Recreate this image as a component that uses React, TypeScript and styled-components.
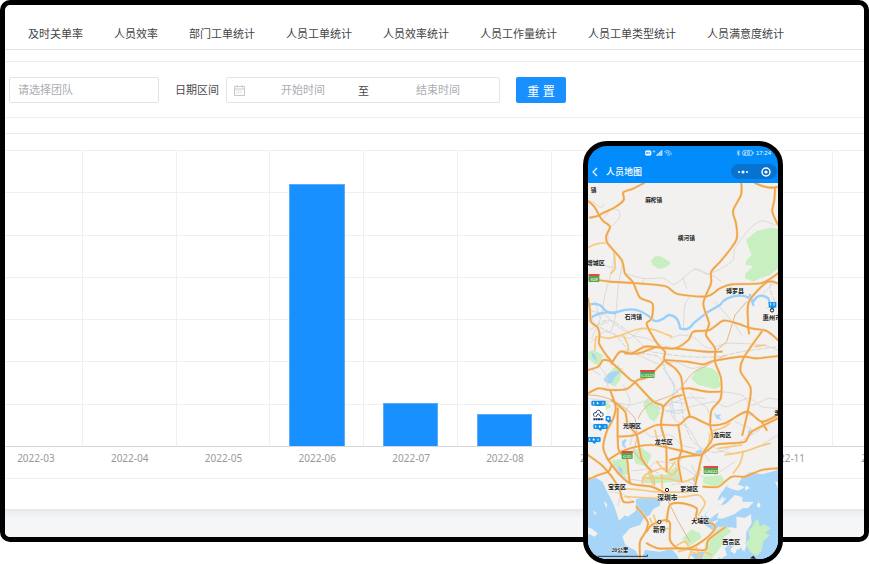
import React from "react";
import styled, { createGlobalStyle } from "styled-components";

const GlobalStyle = createGlobalStyle`
  * { box-sizing: border-box; }
  body {
    margin: 0;
    background: #fff;
    font-family: "Liberation Sans", "Noto Sans CJK SC", sans-serif;
    font-size: 11px;
    color: #4a4a4a;
  }
  button, input { font: inherit; }
`;

const Stage = styled.main`
  position: relative;
  min-height: 564px;
`;

const Monitor = styled.section`
  display: flex;
  flex-direction: column;
  overflow: hidden;
  border: 5px solid #000;
  border-radius: 10px;
  background: #fff;
`;

const Tabs = styled.nav`
  display: flex;
  gap: 31px;
  padding: 20px 23px 6px;
  border-bottom: 1px solid #e2e3e5;
  white-space: nowrap;
`;

const Tab = styled.a`
  color: #444;
  line-height: 18px;
  text-decoration: none;
`;

const Filters = styled.form`
  display: flex;
  align-items: center;
  margin-top: 11px;
  padding: 15px 4px 14px;
  border-top: 1px solid #ebecee;
  border-bottom: 1px solid #eff0f2;
`;

const TeamInput = styled.input`
  width: 150px;
  height: 26px;
  padding: 0 8px;
  border: 1px solid #e2e4e8;
  border-radius: 2px;
  outline: none;
  &::placeholder { color: #a9acb2; }
`;

const DateLabel = styled.label`
  margin: 0 7px 0 16px;
  line-height: 18px;
`;

const DateRange = styled.div`
  display: flex;
  align-items: center;
  width: 274px;
  height: 26px;
  padding-left: 7px;
  border: 1px solid #e2e4e8;
  border-radius: 2px;
`;

const DateInput = styled.input<{ $width: number }>`
  width: ${(p) => p.$width}px;
  height: 22px;
  padding: 0;
  border: 0;
  outline: none;
  background: transparent;
  text-align: center;
  &::placeholder { color: #a9acb2; }
`;

const RangeWord = styled.span`
  margin-right: 9px;
`;

const CalendarIcon = styled.svg`
  flex: none;
  width: 11px;
  height: 11px;
  margin-right: 3px;
`;

const ResetButton = styled.button`
  width: 50px;
  height: 26px;
  margin-left: 16px;
  padding: 0;
  border: 0;
  border-radius: 2px;
  background: #1890ff;
  color: #fff;
  font-size: 12px;
`;

const ChartCard = styled.section`
  margin-top: 15px;
  padding-top: 16px;
  border-top: 1px solid #e9eaec;
  border-bottom: 1px solid #eff0f2;
`;

const Chart = styled.div`
  display: grid;
  grid-template-columns: repeat(10, 1fr);
  width: calc(100% + 79px);
  margin-left: -16px;
`;

const Plot = styled.div`
  display: flex;
  grid-column: 1 / -1;
  height: 297px;
  border-bottom: 1px solid #d6d7d9;
  background: repeating-linear-gradient(#edeff1 0 1px, transparent 1px calc(100% / 7));
`;

const Band = styled.div`
  display: flex;
  flex: 1;
  align-items: flex-end;
  justify-content: center;
  border-right: 1px solid #eff0f2;
`;

const Bar = styled.div`
  width: 60%;
  border: 1px solid #5cacf7;
  border-bottom: 0;
  background: #1890ff;
`;

const Month = styled.span`
  padding: 3px 0 11px;
  color: #999;
  font-family: "Noto Sans", sans-serif;
  font-size: 10px;
  line-height: 17px;
  text-align: center;
`;

const PageFoot = styled.footer`
  height: 28px;
  margin-top: 30px;
  background: linear-gradient(#e5e7ea 0, #edeff0 4px, #f5f6f8 9px);
`;

const Phone = styled.section`
  position: absolute;
  top: 141px;
  left: 583px;
  width: 200px;
  overflow: hidden;
  border: 5px solid #000;
  border-radius: 24px;
  background: #028bfb;
  color: #fff;
`;

const StatusBar = styled.div`
  display: flex;
  align-items: center;
  justify-content: space-between;
  height: 14px;
  padding: 0 7px 0 57px;
  font-size: 6px;
`;

const StatusGroup = styled.div`
  display: flex;
  align-items: center;
  gap: 1px;
`;

const AppBar = styled.header`
  display: flex;
  align-items: center;
  height: 23px;
  padding: 0 1px 0 4px;
`;

const BackButton = styled.button`
  display: flex;
  width: 6px;
  height: 12px;
  padding: 0;
  border: 0;
  background: none;
`;

const AppTitle = styled.h1`
  flex: 1;
  margin: 0 0 0 8px;
  font-size: 9px;
  font-weight: 500;
  line-height: 12px;
`;

const Capsule = styled.div`
  display: flex;
  align-items: center;
  justify-content: space-around;
  width: 46px;
  height: 15px;
  border-radius: 8px;
  background: #0873ce;
`;

const CapsuleButton = styled.button`
  display: flex;
  padding: 0;
  border: 0;
  background: none;
`;

const MapDrawing = styled.svg`
  display: block;
  width: 100%;
  height: 376px;
  background: #f2f1ef;
  font-family: "Liberation Serif", "Noto Sans CJK SC", sans-serif;
`;

const tabs = [
  "及时关单率", "人员效率", "部门工单统计", "人员工单统计",
  "人员效率统计", "人员工作量统计", "人员工单类型统计", "人员满意度统计",
];

const months = [
  { name: "2022-03", value: 0 },
  { name: "2022-04", value: 0 },
  { name: "2022-05", value: 0 },
  { name: "2022-06", value: 88.4 },
  { name: "2022-07", value: 14.6 },
  { name: "2022-08", value: 10.8 },
  { name: "2022-09", value: 0 },
  { name: "2022-10", value: 0 },
  { name: "2022-11", value: 0 },
  { name: "2022-12", value: 0 },
];

/* Turns straight "M x y L x y ..." polylines into curves through the same points. */
function smooth(d: string): string {
  return d
    .split("M")
    .filter((part) => part.trim())
    .map((part) => {
      const n = (part.match(/\d+/g) || []).map(Number);
      const pts: number[][] = [];
      for (let i = 0; i + 1 < n.length; i += 2) pts.push([n[i], n[i + 1]]);
      let out = `M${pts[0][0]} ${pts[0][1]}`;
      for (let i = 0; i < pts.length - 1; i++) {
        const a = pts[i - 1] || pts[i];
        const b = pts[i];
        const c = pts[i + 1];
        const e = pts[i + 2] || c;
        out += `C${b[0] + (c[0] - a[0]) / 7} ${b[1] + (c[1] - a[1]) / 7} ${c[0] - (e[0] - b[0]) / 7} ${c[1] - (e[1] - b[1]) / 7} ${c[0]} ${c[1]}`;
      }
      return out;
    })
    .join("");
}

const minorRoads = [
  "M39 195 L60 205 L76 217 L83 214 L86 208",
  "M83 255 L108 224 L131 227 L132 250 L103 284 L98 330",
  "M118 345 L112 400 L90 478 L78 545 L50 610",
  "M143 375 L138 410 L130 450 L122 540 L108 590",
  "M150 415 L205 430 L265 430 L300 447 L360 402 L400 417 L470 380 L480 340 L520 285 L560 258 L600 270",
  "M360 402 L420 425 L437 440 M325 430 L335 460 M205 430 L205 448",
  "M345 485 L330 510 L325 580 M420 500 L455 540 L480 570 L500 600",
  "M565 475 L600 440 M39 385 L80 378 L90 392 L125 400",
  "M39 525 L90 540 L122 570 L170 600 L215 610 L260 630",
  "M50 620 L90 590 L160 610 L205 580 L240 585",
  "M285 610 L320 600 L360 610 L400 640 L460 625 L560 630 L609 645",
  "M39 790 L110 800 L165 810 L210 800 L250 820 L330 790 L390 790",
  "M255 820 L310 835 L345 815 L390 812 L410 860",
  "M345 775 L380 805 L420 800 L455 815 L520 790 L560 815 L609 820",
  "M438 770 L500 780 L530 810 L580 790 L609 795",
  "M150 645 L200 665 L260 690 L300 680 L350 700 L390 690",
  "M145 750 L165 800 L150 840 L175 880 L165 930",
  "M60 680 L90 715 L100 760 M80 640 L110 690",
  "M285 800 L295 850 L340 880 L370 930 L405 980",
  "M200 880 L230 905 L285 900 L320 930 L360 940",
  "M400 895 L420 940 L480 955 L540 940 L609 900",
  "M508 835 L550 850 L565 875 M480 860 L535 885",
  "M90 970 L125 1000 L160 1030 L220 1040",
  "M170 1008 L220 1000 L245 980 L310 990 L360 1020",
  "M320 970 L300 1010 L315 1050 M350 990 L360 1010 L390 1030",
  "M290 1050 L340 1040 L370 1060 M420 1020 L450 1000 L480 980",
  "M45 540 L65 570 L100 560 M60 500 L75 550",
  "M105 1070 L150 1080 L170 1100 M140 1060 L130 1110",
];

const railRoads = [
  "M39 555 L80 580 L120 600 L170 650 L250 665 L275 715 L315 790 L325 850",
  "M592 425 L585 460 L600 505 L575 520",
  "M45 585 L100 555 L160 590 L220 645 L260 655 L340 665 L430 665 L500 650 L609 635",
  "M180 950 L210 985 L250 1015 L320 1035",
  "M325 845 L350 915 L405 950 L460 940 L609 850",
];

const dashedHighways = [
  "M39 780 C90 780 140 800 180 850 C190 900 185 920 175 950 C210 990 235 1010 240 1050",
  "M190 850 C215 790 260 800 300 775 C340 740 340 710 390 695 L450 660",
  "M515 500 L480 540 L455 620 L420 650 L340 645 L270 635",
  "M280 1100 L310 1160 L345 1220",
];

const highways = [
  "M207 144 L172 162 L145 172 L146 195 L118 218 L84 234 L70 242 L45 248",
  "M39 198 L58 215 L73 242 L84 258 L105 275 L94 302 L98 325 L140 375 L150 415 L174 442 L195 488 L232 505 L230 550 L215 565 L225 590 L250 630 L270 650 L268 675 L300 700 L318 725 L325 770 L345 845",
  "M499 144 L498 180 L474 228 L483 265 L484 315 L440 375 L409 410 L408 445 L385 505 L402 565 L393 600 L420 640 L420 680 L438 730 L437 790 L410 825 L405 870",
  "M540 144 L565 154 L588 158 L609 156 M600 160 L598 195 L592 230 L609 270",
  "M39 430 L105 440 L174 444 L270 453 L307 477 L395 484 L435 460 L470 448 L560 444 L609 415",
  "M108 680 L165 733 L180 742 L235 800 L264 815 L258 870 L273 930 L275 1010",
  "M609 445 L575 442 L522 500 L519 560 L522 595 M560 590 L505 670 L497 710 L527 760 L518 830 L502 900",
  "M39 490 L45 525 L48 560 L68 578 L74 600 L72 625 L90 655 L110 680",
  "M110 685 L135 650 L170 655 L210 635 L250 637 L300 640 L340 615 L355 590 L403 585 L445 557 L485 565 L530 580 L575 588 L609 615",
  "M270 675 L335 680 L385 688 L415 678 L500 665 L545 670 L609 663",
  "M150 655 L190 655 L245 635 M300 640 L390 650 L440 650",
  "M39 705 L70 695 L85 675 L110 680",
  "M39 775 L70 760 L105 765 L155 762 L188 735 L220 725 L270 675",
  "M128 905 L180 900 L245 870 L310 870 L345 845 L405 870 L450 865 L515 830 L560 860 L609 840",
  "M105 765 L122 815 L115 850 L95 890 L85 940 L112 992 L165 1045 L230 1055 L280 1080",
  "M110 795 L150 830 L158 870 L185 900 L200 970 L230 1010",
  "M128 820 L130 940 L155 970 L160 1010 L165 1045",
  "M310 870 L316 910 L320 945 L310 980 L320 1040",
  "M405 870 L412 910 L390 945 L380 965 L360 1055",
  "M100 975 L150 945 L230 930 L330 950 L375 960 L420 930 L460 925 L510 920 L530 890 L609 850",
  "M39 960 L85 995 L130 1055 L145 1100 L175 1100 M39 1035 L70 1020 L100 1010 L110 990",
  "M185 1115 L218 1160 L212 1190 L195 1220 L195 1272",
  "M215 1190 L230 1170 L270 1155 L285 1165 L285 1215 L310 1240 L355 1235 L405 1200 L418 1170 L365 1150 L365 1120 L325 1105 L285 1110 L275 1160",
  "M215 1225 L250 1240 L320 1240 L390 1245 L400 1215 L450 1177",
  "M385 1055 L430 1055 L470 1025 L510 1025 L560 1005 L609 1000",
  "M320 780 L290 790 L265 815 M320 762 L345 760 L395 770 L438 770",
  "M560 860 L575 885 M285 975 L330 965 L375 960",
];

const localRoads = [
  "M39 338 L60 328 L95 325 L116 350 L120 400 L107 415",
  "M60 645 L65 605 L100 610 L140 600 L180 585 L205 580 L240 585 L290 605",
  "M145 600 L160 635 L155 655",
  "M400 930 L410 890 L440 880 L465 865 M430 940 L500 930",
  "M540 635 L570 630 M450 960 L505 950 L550 935 L585 925",
  "M202 1030 L270 1030 L325 1040 L370 1020 L375 990",
  "M202 1045 L210 1020 L265 1000 L290 1020 L310 1000",
  "M135 1060 L200 1065 L240 1070 L340 1070 L360 1050",
  "M150 1085 L260 1090 L330 1085 L370 1080 L390 1105 L370 1140",
  "M225 1150 L235 1175 M236 1140 L246 1170 M245 1185 L280 1180",
  "M300 1235 L330 1220 L350 1250 L380 1260 M310 1250 L360 1240 L410 1260 M340 1272 L360 1230 L375 1272",
  "M505 950 L495 985 L475 1015 M240 885 L250 930",
  "M245 980 L275 1010 L300 980 M220 1010 L235 1050 M260 1020 L262 1060",
];

const rivers = [
  "M39 510 Q70 500 85 520 T130 530 T185 525 Q215 535 230 552 T280 540 Q310 540 315 580 Q340 590 355 565 Q380 545 400 530 L435 510 Q450 485 490 482 Q520 480 535 500 Q550 470 580 490 L590 525",
  "M45 550 Q80 525 120 535",
  "M525 480 L535 510",
];

const places = [
  { name: "镇", x: 56, y: 171, size: 17 },
  { name: "麻榨镇", x: 236, y: 200, size: 17 },
  { name: "横河镇", x: 334, y: 315, size: 17 },
  { name: "增城区", x: 62, y: 389, size: 18 },
  { name: "博罗县", x: 480, y: 474, size: 18 },
  { name: "石湾镇", x: 175, y: 553, size: 17 },
  { name: "惠州市", x: 591, y: 555, size: 19 },
  { name: "光明区", x: 171, y: 879, size: 18 },
  { name: "龙华区", x: 266, y: 928, size: 18 },
  { name: "龙岗区", x: 442, y: 905, size: 18 },
  { name: "惠", x: 607, y: 839, size: 18 },
  { name: "宝安区", x: 126, y: 1063, size: 18 },
  { name: "罗湖区", x: 343, y: 1069, size: 18 },
  { name: "深圳市", x: 277, y: 1095, size: 20 },
  { name: "大埔区", x: 376, y: 1164, size: 18 },
  { name: "新界", x: 253, y: 1191, size: 19 },
  { name: "西贡区", x: 469, y: 1228, size: 18 },
  { name: "20公里", x: 135, y: 1251, size: 17 },
];

const shields = [
  { name: "S29", x: 41, y: 417, width: 32 },
  { name: "G1523", x: 196, y: 705, width: 43 },
  { name: "G15", x: 140, y: 948, width: 33 },
  { name: "G0422", x: 386, y: 993, width: 43 },
];

const vehicles = [
  { x: 49, y: 797, width: 43 },
  { x: 81, y: 843, width: 26 },
  { x: 55, y: 867, width: 43 },
  { x: 37, y: 906, width: 40 },
];

function RegionMap() {
  return (
    <MapDrawing viewBox="39 144 570 1128" preserveAspectRatio="xMidYMid slice" role="img" aria-label="人员地图">
      <g fill="#c8efc0">
        <path d="M513 315 L545 288 L590 278 L609 281 V400 L585 420 L555 430 L535 440 L510 430 L512 415 L535 393 L510 390 L515 375 L530 360 L522 340Z" />
        <path d="M228 377 L242 362 L260 365 L288 383 L273 397 L250 402 L233 390Z" />
        <path d="M348 730 L365 705 L385 696 L412 700 L430 715 L436 755 L420 762 L370 750Z" />
        <path d="M210 795 L225 786 L250 800 L255 835 L238 860 L222 850 L205 810Z" />
        <path d="M39 650 L55 645 L85 660 L75 690 L55 685 L39 670Z M95 720 L120 695 L143 700 L135 735 L120 755 L100 745Z M52 800 L95 800 L110 815 L80 830Z" />
        <path d="M175 945 L200 938 L230 960 L215 995 L180 985Z M110 975 L155 970 L160 1020 L125 1020Z" />
        <path d="M205 1025 L230 1020 L270 1020 L315 985 L318 1040 L245 1045 L205 1045Z M385 1025 L440 1020 L448 1040 L420 1055 L385 1045Z" />
      </g>
      <g fill="#a7d5f8">
        <path d="M39 1025 L65 1030 L82 1040 L95 1068 L113 1102 L120 1120 L132 1157 L150 1141 L158 1145 L182 1128 L183 1092 L220 1085 L258 1092 L254 1112 L235 1122 L224 1141 L207 1149 L195 1170 L165 1180 L142 1205 L151 1230 L183 1248 L195 1272 L39 1272Z" />
        <path d="M609 1005 L560 1018 L525 1012 L500 1028 L490 1047 L455 1052 L434 1080 L427 1096 L455 1088 L437 1110 L405 1120 L388 1140 L393 1150 L375 1140 L390 1170 L420 1190 L430 1176 L470 1180 L465 1225 L440 1240 L430 1272 H609Z" />
        <path d="M210 1245 L255 1250 L290 1242 L310 1265 L310 1272 L200 1272Z M345 1258 L390 1248 L382 1272 H360Z" />
        <path d="M85 733 L102 715 L122 708 L137 710 L120 725 L110 745 L95 745Z M125 698 L132 690 L132 710Z M48 650 L60 660 L67 680 L53 668Z" />
        <path d="M416 832 L425 840 L440 838 L432 846 L440 856 L424 850Z M140 920 L150 912 L155 916 L148 928 L155 940 L143 935Z M525 882 L533 895 L524 904 L518 892Z M360 950 L375 943 L387 950 L378 966 L366 960Z M353 1034 L365 1010 L374 996 L371 1025 L361 1048Z M130 990 L143 1003 L143 1020 L132 1014Z" />
      </g>
      <g fill="#f2f1ef">
        <path d="M390 1140 L405 1118 L452 1107 L480 1080 L502 1087 L502 1100 L536 1101 L519 1119 L502 1120 L478 1138 L441 1151 L426 1150 L431 1132 L405 1151Z" />
        <path d="M423 1183 L466 1177 L485 1180 L484 1145 L510 1148 L528 1138 L530 1165 L514 1190 L513 1220 L490 1245 L465 1229 L435 1248Z" />
        <path d="M413 1242 L440 1212 L456 1260 L437 1272Z M468 1238 L490 1233 L480 1257 L467 1249Z M500 1210 L515 1230 L508 1250 L498 1240Z" />
        <path d="M455 1055 L475 1043 L510 1057 L490 1067 L470 1062Z M512 1050 L525 1059 L510 1067Z M550 1100 L557 1110 L552 1120 L545 1112Z M600 1040 L609 1042 V1060Z" />
        <path d="M86 1097 L97 1108 L94 1120Z M53 1125 L65 1135 L60 1140Z M435 1090 L446 1084 L444 1093Z M405 1164 L432 1153 L414 1172Z" />
        <path d="M39 1177 L50 1181 L68 1195 L60 1205 L39 1196Z" />
      </g>
      <g fill="#c8efc0">
        <path d="M520 1187 L532 1175 L540 1158 L549 1151 L554 1174 L568 1168 L587 1180 L570 1193 L585 1201 L564 1220 L560 1247 L545 1264 L525 1250 L511 1223 L524 1211Z" />
        <path d="M323 1210 L350 1183 L374 1195 L380 1208 L345 1232 L330 1225Z" />
        <path d="M390 1225 L415 1190 L440 1175 L455 1175 L470 1190 L448 1205 L438 1235 L410 1272 H385Z" />
      </g>
      <g fill="none" strokeLinecap="round" strokeLinejoin="round">
        <g stroke="#dbdad8" strokeWidth="3">
          {minorRoads.map((d) => <path key={d} d={smooth(d)} />)}
        </g>
        <g stroke="#d3d3d5" strokeWidth="3" strokeDasharray="14 7">
          {railRoads.map((d) => <path key={d} d={smooth(d)} />)}
        </g>
        <g stroke="#98cffb" strokeWidth="7">
          {rivers.map((d) => <path key={d} d={d} />)}
        </g>
        <g stroke="#bfdcf1" strokeWidth="3">
          <path d="M265 700 L300 750 L290 800 L300 850 M275 830 L320 825 M288 800 L330 805 M130 980 L110 1000 M135 1010 L155 1030 M45 700 L75 720" />
        </g>
        <g stroke="#e5b48a" strokeWidth="3">
          {dashedHighways.map((d) => <path key={d} d={d} />)}
        </g>
        <g stroke="#f9c87a" strokeWidth="5">
          {localRoads.map((d) => <path key={d} d={smooth(d)} />)}
        </g>
        <g stroke="#fbd8a4" strokeWidth="8">
          {highways.map((d) => <path key={d} d={smooth(d)} />)}
        </g>
        <g stroke="#eda44e" strokeWidth="5">
          {highways.map((d) => <path key={d} d={smooth(d)} />)}
        </g>
      </g>
      {shields.map((s) => (
        <g key={s.name}>
          <rect x={s.x} y={s.y} width={s.width} height="24" rx="2" fill="#55a551" />
          <rect x={s.x} y={s.y} width={s.width} height="6" fill="#e54846" />
          <text x={s.x + s.width / 2} y={s.y + 20} textAnchor="middle" fontSize="14" fontWeight="700" fill="#e8f5df">{s.name}</text>
        </g>
      ))}
      <g fill="#148eea">
        {vehicles.map((v) => (
          <g key={v.y}>
            <rect x={v.x} y={v.y} width={v.width} height="15" rx="4" />
            <path d={`M${v.x + 12} ${v.y + 13} h18 l-9 8z`} />
            <path d={`M${v.x + 7} ${v.y + 4} v7 M${v.x + 16} ${v.y + 8} h6 M${v.x + 19} ${v.y + 4} v7 M${v.x + v.width - 8} ${v.y + 5} v6`} stroke="#fff" strokeWidth="3" />
          </g>
        ))}
        <path d="M581 501 h23 v16 l-8 2 v7 h-8 v-7 l-7-2z" />
        <path d="M587 503 v9 M597 503 v9" stroke="#e4f4ff" strokeWidth="3" />
      </g>
      <rect x="48" y="813" width="44" height="50" rx="4" fill="#fff" />
      <path d="M58 845 C52 836 58 831 63 834 C63 823 77 823 77 834 C83 831 88 838 81 845 M62 846 L70 836 L78 846" fill="none" stroke="#173366" strokeWidth="3" />
      <path d="M55 853 H85" stroke="#173366" strokeWidth="6" strokeDasharray="6 1" />
      <g fill="#f5f5f5" stroke="#222" strokeWidth="3">
        <circle cx="591" cy="526" r="5" />
        <circle cx="276" cy="1065" r="5" />
        <circle cx="253" cy="1161" r="5" />
      </g>
      <path d="M45 1264 H217 V1259" fill="none" stroke="#333" strokeWidth="3" />
      <path d="M525 1270 L535 1262 L543 1272Z" fill="#222" />
      <g fill="#171717" stroke="#f7f7f5" strokeWidth="2" paintOrder="stroke" fontWeight="700" textAnchor="middle">
        {places.map((p) => <text key={p.name + p.y} x={p.x} y={p.y} fontSize={p.size}>{p.name}</text>)}
      </g>
    </MapDrawing>
  );
}

export default function App() {
  return (
    <Stage>
      <GlobalStyle />
      <Monitor>
        <Tabs>
          {tabs.map((name) => <Tab key={name} href="#">{name}</Tab>)}
        </Tabs>
        <Filters>
          <TeamInput aria-label="团队" placeholder="请选择团队" />
          <DateLabel htmlFor="start-date">日期区间</DateLabel>
          <DateRange>
            <CalendarIcon viewBox="0 0 11 11" fill="none" stroke="#c5c8cd">
              <path d="M.5 1.5h10v9H.5z M.5 4h10 M3 0v2.5 M8 0v2.5" />
              <path d="M2.5 6h6 M2.5 8h6" strokeDasharray="1 1" />
            </CalendarIcon>
            <DateInput id="start-date" $width={110} placeholder="开始时间" />
            <RangeWord>至</RangeWord>
            <DateInput aria-label="结束时间" $width={120} placeholder="结束时间" />
          </DateRange>
          <ResetButton type="reset">重 置</ResetButton>
        </Filters>
        <ChartCard>
          <Chart>
            <Plot>
              {months.map((m) => (
                <Band key={m.name}>
                  {m.value > 0 && <Bar style={{ height: `${m.value}%` }} />}
                </Band>
              ))}
            </Plot>
            {months.map((m) => <Month key={m.name}>{m.name}</Month>)}
          </Chart>
        </ChartCard>
        <PageFoot />
      </Monitor>
      <Phone>
        <StatusBar>
          <StatusGroup>
            <svg width="28" height="8" viewBox="0 0 84 24" fill="none" stroke="#e4f3ff" strokeWidth="2">
              <rect x="1" y="5" width="17" height="14" rx="3" fill="#fff" />
              <path d="M5 9v6 M9 9v6 M5 12h4 M13 9v6" stroke="#1683df" />
              <path d="M25 5v5 M29 5v5 M25 7h4" />
              <path d="M34 19 L51 4 V19Z" fill="#9bd0fb" />
              <path d="M58 8 Q66 1 76 8 M61 12 Q67 7 73 12 M65 15 L70 20 M72 12v8 M78 10v9" />
            </svg>
          </StatusGroup>
          <StatusGroup>
            <svg width="19" height="8" viewBox="0 0 57 24" fill="none" stroke="#e4f3ff" strokeWidth="2">
              <path d="M3 8 L11 16 L7 20 V4 L11 8 L3 16" />
              <rect x="20" y="5" width="29" height="14" rx="4" />
              <path d="M52 9v6" />
              <path d="M25 9h5v3h-5v4h5 M35 8h5v8h-5z" />
            </svg>
            <span>17:24</span>
          </StatusGroup>
        </StatusBar>
        <AppBar>
          <BackButton aria-label="返回">
            <svg width="6" height="12" viewBox="0 0 6 12" fill="none" stroke="#fff" strokeWidth="1.2">
              <path d="M5 2 L1 6 L5 10" />
            </svg>
          </BackButton>
          <AppTitle>人员地图</AppTitle>
          <Capsule>
            <CapsuleButton aria-label="更多">
              <svg width="12" height="6" viewBox="0 0 12 6" fill="#fff">
                <circle cx="2" cy="3" r="1" /><circle cx="6" cy="3" r="1.6" /><circle cx="10" cy="3" r="1" />
              </svg>
            </CapsuleButton>
            <CapsuleButton aria-label="关闭">
              <svg width="10" height="10" viewBox="0 0 10 10" fill="none" stroke="#fff" strokeWidth="1.4">
                <circle cx="5" cy="5" r="4" /><circle cx="5" cy="5" r="1.6" fill="#fff" stroke="none" />
              </svg>
            </CapsuleButton>
          </Capsule>
        </AppBar>
        <RegionMap />
      </Phone>
    </Stage>
  );
}
